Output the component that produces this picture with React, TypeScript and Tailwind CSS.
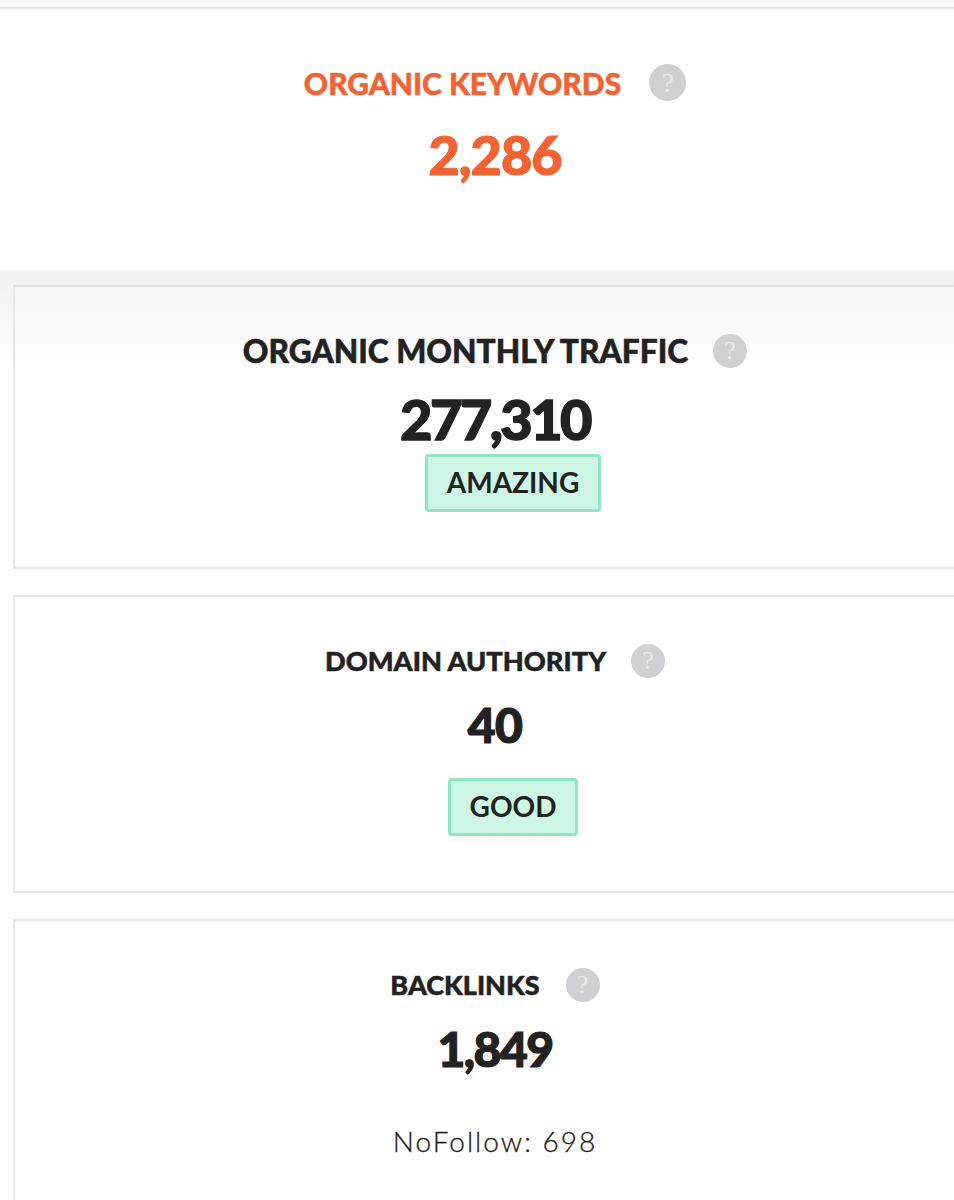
const font = { fontFamily: '"Lato", "Liberation Sans", sans-serif' };

function Help({ big }: { big?: boolean }) {
  return (
    <span
      className={`flex shrink-0 items-center justify-center rounded-full bg-[#cfd0d2] font-['Liberation_Serif',serif] leading-none font-normal text-[#eaeaeb] ${
        big ? "h-[37px] w-[37px] text-[28px]" : "h-[34px] w-[34px] text-[26px]"
      }`}
    >
      ?
    </span>
  );
}

function Title({ label, size, gap, orange }: { label: string; size: string; gap: string; orange?: boolean }) {
  return (
    <div className={`flex items-center justify-center ${gap}`}>
      <span className={`${size} leading-[36px] font-black [-webkit-text-stroke:0.5px_currentColor] ${orange ? "text-[#f26334]" : "text-[#222222]"}`}>
        {label}
      </span>
      <Help big={orange} />
    </div>
  );
}

function Badge({ label }: { label: string }) {
  return (
    <div className="ml-[36px] flex h-[58px] items-center justify-center rounded-[4px] border-[3px] border-[#8fe6c4] bg-[#cdf6e5] px-[19px] pb-[2px] text-[28px] font-bold text-[#222222]">
      {label}
    </div>
  );
}

export default function App() {
  return (
    <div className="h-[1200px] w-[954px] overflow-hidden bg-white" style={font}>
      <div className="w-[990px]">
        <div className="h-[9px] border-b-2 border-[#e6e6e8] bg-[#f8f8f8]" />

        <section className="flex h-[261px] flex-col items-center bg-white pt-[55px]">
          <Title label="ORGANIC KEYWORDS" size="text-[30px]" gap="gap-[28px]" orange />
          <div className="mt-[22px] text-[54px] leading-[64px] font-black tracking-[-1px] text-[#f26334] [-webkit-text-stroke:1.2px_currentColor]">2,286</div>
        </section>

        <div className="bg-gradient-to-b from-[#f0f0f1] to-white to-[100px] pt-[15px] pl-[13px]">
          <div className="flex w-[964px] flex-col gap-[26px]">
            <section className="flex h-[284px] flex-col items-center border-2 border-[#e6e6ea] border-t-[#dfe0e6] bg-gradient-to-b from-[#f5f5f6] to-white to-[90px] pt-[46px]">
              <Title label="ORGANIC MONTHLY TRAFFIC" size="text-[31.7px]" gap="gap-[25px]" />
              <div className="mt-[16px] text-[56px] leading-[68px] font-black tracking-[-2.6px] text-[#222222] [-webkit-text-stroke:1.4px_currentColor]">277,310</div>
              <div className="mt-[1px]">
                <Badge label="AMAZING" />
              </div>
            </section>

            <section className="flex h-[298px] flex-col items-center border-2 border-[#e6e6ea] bg-white pt-[46px]">
              <Title label="DOMAIN AUTHORITY" size="text-[27.2px]" gap="gap-[25px]" />
              <div className="mt-[17px] text-[48px] leading-[58px] font-black tracking-[-0.5px] text-[#222222] [-webkit-text-stroke:1.2px_currentColor]">40</div>
              <div className="mt-[24px]">
                <Badge label="GOOD" />
              </div>
            </section>

            <section className="flex h-[298px] flex-col items-center border-2 border-[#e6e6ea] bg-white pt-[46px]">
              <Title label="BACKLINKS" size="text-[27px]" gap="gap-[26px]" />
              <div className="mt-[17px] text-[48px] leading-[58px] font-black tracking-[-1.5px] text-[#222222] [-webkit-text-stroke:1.2px_currentColor]">1,849</div>
              <div className="mt-[46px] text-[28px] leading-[34px] font-light tracking-[2px] text-[#222222] [-webkit-text-stroke:0.3px_currentColor]">NoFollow: 698</div>
            </section>
          </div>
        </div>
      </div>
    </div>
  );
}
